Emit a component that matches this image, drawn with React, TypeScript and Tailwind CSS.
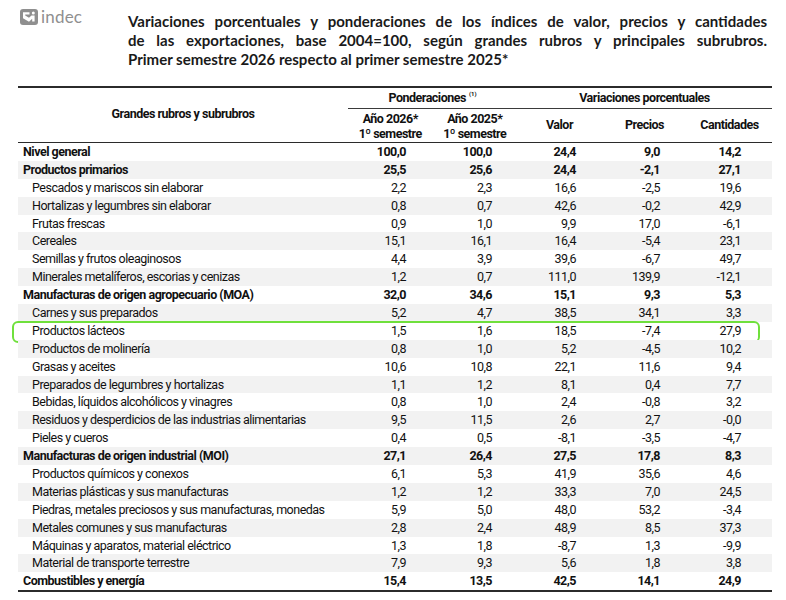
import React from "react";

type Row = { l: string; b?: boolean; v: string[] };

const rows: Row[] = [
  { l: "Nivel general", b: true, v: ["100,0", "100,0", "24,4", "9,0", "14,2"] },
  { l: "Productos primarios", b: true, v: ["25,5", "25,6", "24,4", "-2,1", "27,1"] },
  { l: "Pescados y mariscos sin elaborar", v: ["2,2", "2,3", "16,6", "-2,5", "19,6"] },
  { l: "Hortalizas y legumbres sin elaborar", v: ["0,8", "0,7", "42,6", "-0,2", "42,9"] },
  { l: "Frutas frescas", v: ["0,9", "1,0", "9,9", "17,0", "-6,1"] },
  { l: "Cereales", v: ["15,1", "16,1", "16,4", "-5,4", "23,1"] },
  { l: "Semillas y frutos oleaginosos", v: ["4,4", "3,9", "39,6", "-6,7", "49,7"] },
  { l: "Minerales metalíferos, escorias y cenizas", v: ["1,2", "0,7", "111,0", "139,9", "-12,1"] },
  { l: "Manufacturas de origen agropecuario (MOA)", b: true, v: ["32,0", "34,6", "15,1", "9,3", "5,3"] },
  { l: "Carnes y sus preparados", v: ["5,2", "4,7", "38,5", "34,1", "3,3"] },
  { l: "Productos lácteos", v: ["1,5", "1,6", "18,5", "-7,4", "27,9"] },
  { l: "Productos de molinería", v: ["0,8", "1,0", "5,2", "-4,5", "10,2"] },
  { l: "Grasas y aceites", v: ["10,6", "10,8", "22,1", "11,6", "9,4"] },
  { l: "Preparados de legumbres y hortalizas", v: ["1,1", "1,2", "8,1", "0,4", "7,7"] },
  { l: "Bebidas, líquidos alcohólicos y vinagres", v: ["0,8", "1,0", "2,4", "-0,8", "3,2"] },
  { l: "Residuos y desperdicios de las industrias alimentarias", v: ["9,5", "11,5", "2,6", "2,7", "-0,0"] },
  { l: "Pieles y cueros", v: ["0,4", "0,5", "-8,1", "-3,5", "-4,7"] },
  { l: "Manufacturas de origen industrial (MOI)", b: true, v: ["27,1", "26,4", "27,5", "17,8", "8,3"] },
  { l: "Productos químicos y conexos", v: ["6,1", "5,3", "41,9", "35,6", "4,6"] },
  { l: "Materias plásticas y sus manufacturas", v: ["1,2", "1,2", "33,3", "7,0", "24,5"] },
  { l: "Piedras, metales preciosos y sus manufacturas, monedas", v: ["5,9", "5,0", "48,0", "53,2", "-3,4"] },
  { l: "Metales comunes y sus manufacturas", v: ["2,8", "2,4", "48,9", "8,5", "37,3"] },
  { l: "Máquinas y aparatos, material eléctrico", v: ["1,3", "1,8", "-8,7", "1,3", "-9,9"] },
  { l: "Material de transporte terrestre", v: ["7,9", "9,3", "5,6", "1,8", "3,8"] },
  { l: "Combustibles y energía", b: true, v: ["15,4", "13,5", "42,5", "14,1", "24,9"] },
];

const padR = ["pr-[27px]", "pr-[25px]", "pr-[26px]", "pr-[27px]", "pr-[31px]"];

function Logo() {
  return (
    <div className="flex items-center gap-[3px] text-[#8f8f8f]">
      <svg width="18" height="16" viewBox="0 0 18 16">
        <rect x="0" y="0" width="18" height="16" rx="3" fill="#8f8f8f" />
        <path d="M3 3.2 L9.5 3.2 L9.5 5.6 L5.2 5.6 L5.2 6.6 L9 8.8 L11.5 6.4 L14.6 6.4 L14.6 12.6 L12.2 12.6 L12.2 9.8 L9 12.8 L3 9.2 Z" fill="#ffffff" />
        <circle cx="13.3" cy="4" r="1.5" fill="#ffffff" />
      </svg>
      <span className="font-['Lato',sans-serif] text-[17px] leading-none tracking-[0.2px] -mt-[2px]">indec</span>
    </div>
  );
}

export default function App() {
  return (
    <div className="w-[786px] h-[600px] bg-white overflow-hidden text-[#1f1f1f]">
      <div className="flex pt-[12px]">
        <div className="pl-[20px] w-[128px] -mt-[3px]">
          <Logo />
        </div>
        <div className="w-[639px] font-['Lato',sans-serif] font-bold text-[15px] leading-[19px] text-[#1a1a1a]">
          <div className="text-justify [text-align-last:justify]">
            Variaciones porcentuales y ponderaciones de los índices de valor, precios y cantidades
          </div>
          <div className="text-justify [text-align-last:justify]">
            de las exportaciones, base 2004=100, según grandes rubros y principales subrubros.
          </div>
          <div>Primer semestre 2026 respecto al primer semestre 2025*</div>
        </div>
      </div>

      <div className="ml-[18px] mt-[17px] w-[754px] font-['Roboto',sans-serif] tracking-[-0.5px] text-[12.5px] text-[#111111]">
        {/* header */}
        <div className="border-t-2 border-[#2b2b2b] border-b-[1.5px] grid grid-cols-[330px_169px_255px] font-bold">
          <div className="flex items-center justify-center pb-[2px]">Grandes rubros y subrubros</div>
          <div className="flex flex-col">
            <div className="h-[21px] flex items-center justify-center border-b border-[#3a3a3a]">
              Ponderaciones<sup className="text-[6px] ml-[3px] -top-[4px] tracking-normal">(1)</sup>
            </div>
            <div className="grid grid-cols-2 h-[33px] leading-[15px] text-center items-center">
              <div>
                Año 2026*
                <br />1º semestre
              </div>
              <div>
                Año 2025*
                <br />1º semestre
              </div>
            </div>
          </div>
          <div className="flex flex-col">
            <div className="h-[21px] flex items-center justify-center border-b border-[#3a3a3a]">
              Variaciones porcentuales
            </div>
            <div className="grid grid-cols-3 h-[33px] text-center items-center">
              <div>Valor</div>
              <div>Precios</div>
              <div>Cantidades</div>
            </div>
          </div>
        </div>

        {/* body */}
        <div className="border-b-2 border-[#2b2b2b]">
          {rows.map((r, i) => (
            <div
              key={r.l}
              className={
                "relative grid grid-cols-[330px_85px_84px_85px_85px_85px] h-[17.9px] items-center " +
                (i % 2 === 1 ? "bg-[#f2f2f2] " : "bg-white ") +
                (r.b ? "font-bold" : "")
              }
            >
              <div className={"whitespace-nowrap " + (r.b ? "pl-[5px]" : "pl-[14px]")}>{r.l}</div>
              {r.v.map((v, j) => (
                <div key={j} className={"text-right " + padR[j]}>
                  {v}
                </div>
              ))}
              {r.l === "Productos lácteos" && (
                <div className="absolute -left-[6px] right-[12px] -top-[1px] -bottom-[3px] border-[2.5px] border-[#6fe03c] rounded-[6px] pointer-events-none" />
              )}
            </div>
          ))}
        </div>
      </div>
    </div>
  );
}
